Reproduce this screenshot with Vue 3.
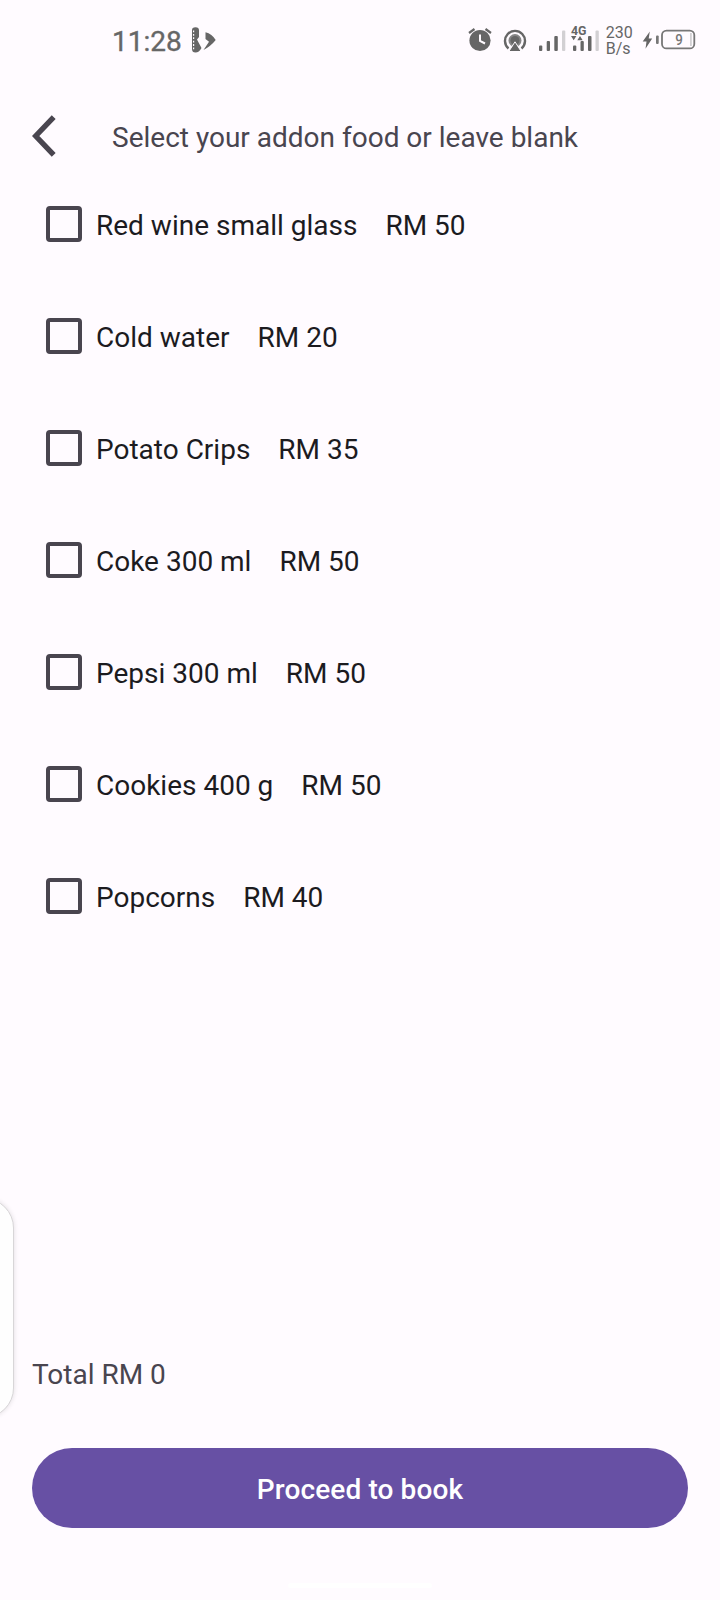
<script setup>
import { ref, computed } from 'vue'

const items = ref([
  { name: 'Red wine small glass', price: 50, checked: false },
  { name: 'Cold water', price: 20, checked: false },
  { name: 'Potato Crips', price: 35, checked: false },
  { name: 'Coke 300 ml', price: 50, checked: false },
  { name: 'Pepsi 300 ml', price: 50, checked: false },
  { name: 'Cookies 400 g', price: 50, checked: false },
  { name: 'Popcorns', price: 40, checked: false },
])
const total = computed(() =>
  items.value.reduce((sum, i) => sum + (i.checked ? i.price : 0), 0)
)
</script>

<template>
  <div class="screen">
    <div class="status">
      <span class="time">11:28</span>
      <svg class="app-mark" width="28" height="28" viewBox="0 0 28 28">
        <path d="M2 4Q2 1.200 5.500 1.200Q9 1.200 9 4.500V11L7 13.500L11.500 22Q9 26.500 5.500 26.500Q2 26.500 2 23Z" fill="#666" />
        <path d="M3.600 4.500V24" stroke="#fffbff" stroke-width="1.200" stroke-dasharray="1.800 1.600" />
        <path d="M15.500 6.300Q22 8 25.700 14Q21 20 13.500 24L19 15.800L15.500 13Z" fill="#666" />
      </svg>
      <svg class="icons" width="140" height="50" viewBox="455 15 140 50">
        <g fill="#666">
          <circle cx="480" cy="40.500" r="10.600" />
          <path d="M469 33L474.500 29M485.500 29L491 33" stroke="#666" stroke-width="2.200" />
          <path d="M480 34.500V41L485 43.500" fill="none" stroke="#fffbff" stroke-width="2" />
          <path d="M508.500 48.500A10 10 0 1 1 521.500 48.500" fill="none" stroke="#666" stroke-width="2.400" />
          <circle cx="515" cy="40.500" r="6.500" fill="#858585" />
          <circle cx="515" cy="40.500" r="4.500" />
          <path d="M515 41.800L521.200 51.500H508.800Z" stroke="#fffbff" stroke-width="1" />
          <rect x="539" y="45.500" width="3.300" height="5.500" rx="1" />
          <rect x="546.700" y="41" width="3.300" height="10" rx="1" />
          <rect x="554.300" y="36" width="3.500" height="15" rx="1" />
          <rect x="562" y="30.500" width="3.300" height="20.500" rx="1" fill="#d2d0d3" />
          <path d="M571 36H576.400L573.700 40.200ZM577.300 40.200L580 36L582.700 40.200Z" />
          <rect x="573" y="45.500" width="3.300" height="5.500" rx="1" />
          <rect x="580.500" y="41" width="3.300" height="10" rx="1" />
          <rect x="588" y="36" width="3.500" height="15" rx="1" />
        </g>
        <text class="net" x="571" y="34.700" textLength="15.500" lengthAdjust="spacingAndGlyphs">4G</text>
      </svg>
      <svg width="110" height="50" viewBox="595 15 110 50">
        <rect x="595.500" y="30.500" width="3.300" height="20.500" rx="1" fill="#d2d0d3" />
        <text class="rate" x="605.700" y="37.700">230</text>
        <text class="rate" x="605.700" y="54">B/s</text>
        <path d="M649.800 31.500L642.700 41.500H646.500L645.500 48.800L652.200 38.500H648.700Z" fill="#666" />
        <rect x="656" y="35.500" width="2.700" height="8.500" rx="1" fill="#777" />
        <rect x="662" y="30.600" width="32.300" height="17.800" rx="4.500" fill="none" stroke="#777" stroke-width="1.800" />
        <rect x="690" y="33" width="1.800" height="13" fill="#d2d0d3" />
        <text class="level" x="675.300" y="44.700" textLength="7.600" lengthAdjust="spacingAndGlyphs">9</text>
      </svg>
    </div>

    <header class="header">
      <svg class="back" width="24" height="42" viewBox="0 0 24 42">
        <path d="M21.700 2.200L3.700 21L21.700 39.800" fill="none" stroke="#49454f" stroke-width="5.400" />
      </svg>
      <h1>Select your addon food or leave blank</h1>
    </header>

    <main class="list">
      <label v-for="item in items" :key="item.name" class="row">
        <input v-model="item.checked" type="checkbox" class="box" />
        <span class="name">{{ item.name }}</span>
        <span class="price">RM {{ item.price }}</span>
      </label>
    </main>

    <footer class="footer">
      <p class="total">Total RM {{ total }}</p>
      <button class="proceed">Proceed to book</button>
    </footer>
    <div class="edge-panel"></div>
    <div class="home-bar"></div>
  </div>
</template>

<style>
body {
  background: #fffbff;
}
</style>

<style scoped>
.screen {
  position: relative;
  box-sizing: border-box;
  width: 720px;
  height: 1600px;
  padding-top: 15px;
  overflow: hidden;
  display: flex;
  flex-direction: column;
  background: #fffbff;
  color: #1c1b1f;
  font: 400 28px/34px Roboto, sans-serif;
}
.status {
  display: flex;
  height: 50px;
  padding-left: 112px;
}
.time {
  width: 78px;
  padding-top: 10px;
  color: #666;
  line-height: 33px;
  -webkit-text-stroke: 0.35px #666;
}
.app-mark {
  margin-top: 11px;
}
.icons {
  margin-left: 237px;
}
.net {
  font: 700 13px Roboto, sans-serif;
  fill: #666;
}
.rate {
  font: 400 16px Roboto, sans-serif;
  fill: #666;
}
.level {
  font: 500 15px Roboto, sans-serif;
  fill: #777;
}
.header {
  display: flex;
  align-items: center;
  height: 103px;
  padding-left: 32px;
  color: #49454f;
}
.back {
  margin-top: 39px;
}
.header h1 {
  margin: 42px 0 0 56px;
  font: inherit;
}
.list {
  flex: 1;
}
.row {
  display: flex;
  align-items: center;
  height: 112px;
  padding-left: 46px;
}
.box {
  appearance: none;
  box-sizing: border-box;
  width: 36px;
  height: 36px;
  margin: 0 14px 0 0;
  border: 4px solid #49454f;
  border-radius: 4px;
}
.box:checked {
  background: #6750a4;
  border-color: #6750a4;
}
.name,
.price {
  padding-top: 3px;
  white-space: nowrap;
}
.price {
  margin-left: 28px;
}
.footer {
  padding: 0 32px 72px;
}
.total {
  margin: 0 0 57px;
  line-height: 32px;
  color: #49454f;
}
.proceed {
  display: block;
  width: 100%;
  height: 80px;
  padding: 3px 0 0;
  border: 0;
  border-radius: 40px;
  background: #6750a4;
  color: #fff;
  font: 500 28px/32px Roboto, sans-serif;
  letter-spacing: 0.12px;
}
.edge-panel {
  position: absolute;
  left: -46px;
  top: 1198px;
  width: 60px;
  height: 220px;
  box-sizing: border-box;
  border: 1px solid #d8d6d8;
  border-radius: 30px;
  background: #fefefe;
  box-shadow: 0 0 5px rgba(0, 0, 0, 0.12);
}
.home-bar {
  position: absolute;
  left: 288px;
  top: 1583px;
  width: 144px;
  height: 5px;
  border-radius: 3px;
  background: #fff;
}
</style>
